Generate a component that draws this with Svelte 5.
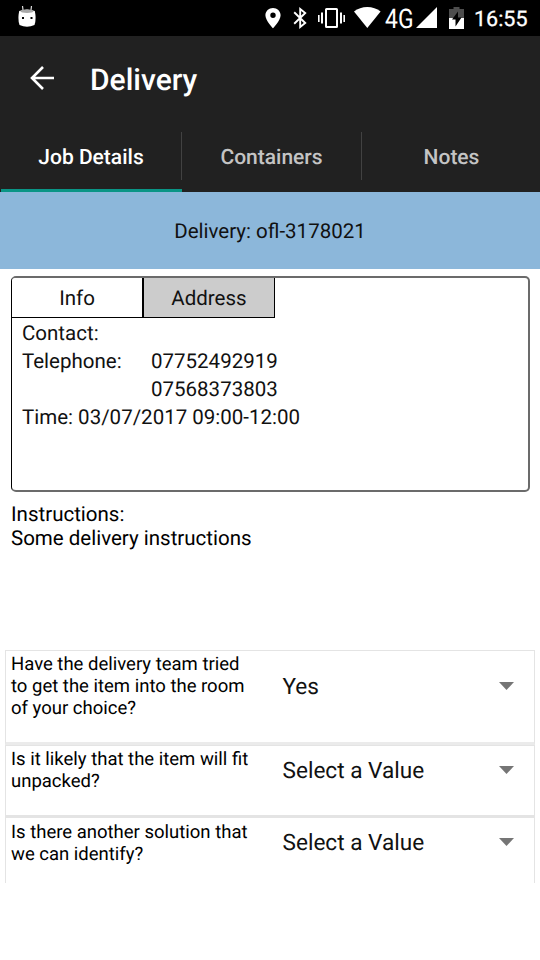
<script>
  const tabs = ["Job Details", "Containers", "Notes"];
  let activeTab = $state("Job Details");
  let infoTab = $state("Info");

  const phones = ["07752492919", "07568373803"];

  const questions = [
    { id: "room", text: "Have the delivery team tried to get the item into the room of your choice?", value: "Yes" },
    { id: "unpacked", text: "Is it likely that the item will fit unpacked?", value: "Select a Value" },
    { id: "solution", text: "Is there another solution that we can identify?", value: "Select a Value" },
  ];
</script>

<div class="screen">
  <div class="status">
    <svg class="droid" width="18" height="36" viewBox="0 0 18 36">
      <path d="M4.500 6l.5 4M13.500 6l-.5 4" stroke="#ddd" stroke-width="1.200" />
      <path d="M1.200 11Q9 8 16.800 11Q18.500 19 16.500 25Q9 28.500 1.500 25Q-.5 19 1.200 11z" fill="#fff" />
      <ellipse cx="9" cy="11.300" rx="6.500" ry="1.700" fill="#aaa" />
      <path d="M4 17h2v2H4zM12.500 17h2v2h-2z" fill="#000" />
    </svg>
    <svg class="pin" width="16" height="36" viewBox="0 0 16 36">
      <path fill="#fff" fill-rule="evenodd" d="M8 8C3.800 8 .4 11.200.4 15.200.4 20.500 8 28.200 8 28.200s7.600-7.700 7.600-13C15.600 11.200 12.200 8 8 8zm0 4.500a2.700 2.700 0 1 1 0 5.400 2.700 2.700 0 0 1 0-5.400z" />
    </svg>
    <svg class="bluetooth" width="14" height="36" viewBox="0 0 14 36">
      <path fill="none" stroke="#fff" stroke-width="1.900" d="M1.200 12.300L12.200 23l-5 4V9l5 4L1.200 23.700" />
    </svg>
    <svg class="vibrate" width="27" height="36" viewBox="0 0 27 36">
      <path fill="#fff" d="M0 15h1.600v7H0zM3 12.500h2v11H3zM22 12.500h2v11h-2zM25.400 15H27v7h-1.600z" />
      <rect x="8" y="9" width="11" height="18" rx=".5" fill="none" stroke="#fff" stroke-width="2" />
    </svg>
    <svg class="wifi" width="27" height="36" viewBox="0 0 27 36">
      <path fill="#fff" d="M13.300 28L0 11.500C3.700 8.500 8.300 7 13.300 7s9.600 1.500 13.300 4.500z" />
    </svg>
    <svg class="network" width="29" height="36" viewBox="0 0 29 36">
      <text x="0" y="28" textLength="28.500" lengthAdjust="spacingAndGlyphs">4G</text>
    </svg>
    <svg class="signal" width="21" height="36" viewBox="0 0 21 36">
      <path fill="#fff" d="M21 7v21H0z" />
    </svg>
    <svg class="battery" width="15" height="36" viewBox="0 0 15 36">
      <path fill="#4d4d4d" d="M0 9h4.500V7h6v2H15v9H0z" />
      <path fill="#fff" d="M0 18h15v11H0z" />
      <path fill="#000" d="M9 11.500L3 19.500h3.500v7l6-9H9z" />
    </svg>
    <span class="clock">16:55</span>
  </div>

  <header>
    <button class="back" aria-label="Back">
      <svg width="24" height="24" viewBox="0 0 24 24">
        <path fill="none" stroke="#fff" stroke-width="2.600" d="M24 12H2M13 1L2 12l11 11" />
      </svg>
    </button>
    <h1>Delivery</h1>
  </header>

  <nav>
    {#each tabs as tab}
      <button class="tab" class:active={activeTab === tab} onclick={() => (activeTab = tab)}>
        <span>{tab}</span>
      </button>
    {/each}
  </nav>

  <div class="banner">Delivery: ofl-3178021</div>

  <section class="card">
    <div class="card-tabs">
      <button class:selected={infoTab === "Info"} onclick={() => (infoTab = "Info")}>Info</button>
      <button class:selected={infoTab === "Address"} onclick={() => (infoTab = "Address")}>Address</button>
    </div>
    <div class="details">
      <div>Contact:</div>
      <div class="phone-row">
        <span class="label">Telephone:</span>
        <div>
          {#each phones as phone}
            <div>{phone}</div>
          {/each}
        </div>
      </div>
      <div>Time: 03/07/2017 09:00-12:00</div>
    </div>
  </section>

  <section class="instructions">
    <div>Instructions:</div>
    <div>Some delivery instructions</div>
  </section>

  <section class="questions">
    {#each questions as question (question.id)}
      <div class="question {question.id}">
        <p>{question.text}</p>
        <button class="select">
          <span>{question.value}</span>
          <svg width="15" height="8" viewBox="0 0 15 8"><path d="M0 0h15L7.500 8z" fill="#757575" /></svg>
        </button>
      </div>
    {/each}
  </section>
</div>

<style>
  :global(body) {
    margin: 0;
    background: #fff;
  }

  .screen {
    width: 540px;
    height: 960px;
    overflow: hidden;
    background: #fff;
    color: #111;
    font-family: Roboto, sans-serif;
    font-size: 20.500px;
    text-rendering: geometricPrecision;
  }

  button {
    padding: 0;
    border: none;
    background: none;
    color: inherit;
    font: inherit;
    text-rendering: inherit;
    cursor: pointer;
  }

  svg {
    display: block;
    flex-shrink: 0;
  }

  .status {
    display: flex;
    height: 36px;
    padding: 0 11px 0 18px;
    background: #000;
    color: #fff;
  }

  .pin {
    margin-left: auto;
  }

  .bluetooth {
    margin-left: 12px;
  }

  .vibrate {
    margin-left: 11px;
  }

  .wifi {
    margin-left: 9px;
  }

  .network {
    margin-left: 4px;
    fill: #fff;
    font-size: 27px;
    overflow: visible;
  }

  .signal {
    margin-left: 2px;
  }

  .battery {
    margin-left: 12px;
  }

  .clock {
    width: 55px;
    margin-left: 10px;
    line-height: 39px;
    font-size: 21.500px;
    -webkit-text-stroke: 0.3px #fff;
    white-space: nowrap;
  }

  header {
    display: flex;
    align-items: center;
    height: 84px;
    padding-left: 30px;
    background: #212121;
    color: #fff;
  }

  h1 {
    margin: 4px 0 0 36px;
    font-size: 30px;
    font-weight: 500;
  }

  nav {
    display: flex;
    box-sizing: border-box;
    height: 72px;
    padding-left: 1px;
    background: #212121;
    overflow: hidden;
  }

  .tab {
    width: 180px;
    flex-shrink: 0;
    display: flex;
    flex-direction: column;
    justify-content: center;
    box-sizing: border-box;
    padding-top: 3px;
    border-bottom: 3px solid transparent;
    color: #c4c4c4;
    font-size: 21px;
    font-weight: 500;
  }

  .tab:first-child {
    width: 181px;
  }

  .tab span {
    width: 100%;
    height: 48px;
    line-height: 53px;
    border-right: 1px solid #424242;
    box-sizing: border-box;
  }

  .tab:last-child span {
    border-right-color: transparent;
  }

  .tab.active {
    border-bottom-color: #0a9586;
    color: #fff;
  }

  .banner {
    height: 77px;
    line-height: 81px;
    overflow: hidden;
    background: #8cb7da;
    color: #111;
    text-align: center;
  }

  .card {
    box-sizing: border-box;
    height: 216px;
    margin: 7px 10px 0 11px;
    border: solid #6b6b6b;
    border-width: 2px 2px 2px 1px;
    border-left-color: #000;
    border-radius: 5px;
    overflow: hidden;
  }

  .card-tabs {
    display: flex;
  }

  .card-tabs button {
    box-sizing: border-box;
    width: 130px;
    height: 40px;
    padding-top: 3px;
    border-bottom: 1px solid #000;
    background: #ccc;
  }

  .card-tabs button + button {
    width: 133px;
    border-left: 2px solid #000;
    border-right: 1px solid #000;
  }

  .card-tabs .selected {
    background: #fff;
  }

  .details {
    padding: 2px 0 0 10px;
    line-height: 28px;
  }

  .phone-row {
    display: flex;
  }

  .label {
    width: 129px;
  }

  .instructions {
    height: 148px;
    padding: 10.500px 11px 0;
    box-sizing: border-box;
    line-height: 24.500px;
    color: #000;
  }

  .questions {
    height: 233px;
    margin: 10px 5px 0;
    overflow: hidden;
  }

  .question {
    display: flex;
    align-items: flex-start;
    box-sizing: border-box;
    height: 72px;
    border: 1px solid #e4e4e4;
    border-bottom: 2px solid #e4e4e4;
  }

  .question.room {
    height: 95px;
    border-bottom: 3px solid #ebebeb;
  }

  .question p {
    width: 245px;
    margin: 3px 0 0 5px;
    font-size: 18.500px;
    line-height: 22px;
    color: #000;
  }

  .unpacked p {
    margin-top: 2px;
  }

  .room p {
    margin-top: 2px;
  }

  .select {
    display: flex;
    align-items: center;
    justify-content: space-between;
    flex: 1;
    height: 48px;
    padding: 0 20px 0 26.500px;
    font-size: 22.600px;
  }

  .select span {
    padding-top: 1px;
  }

  .room .select {
    height: 70px;
  }
</style>
